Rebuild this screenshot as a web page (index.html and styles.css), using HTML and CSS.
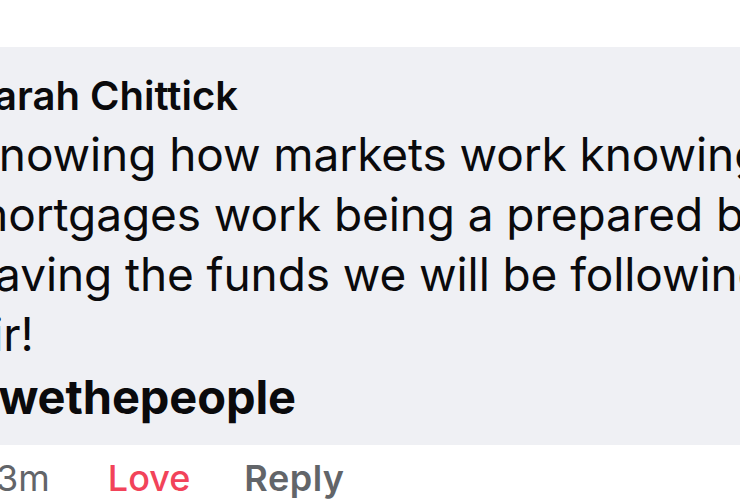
FILE: index.html
```html
<!DOCTYPE html>
<html lang="en">

<head>
    <meta charset="UTF-8">
    <meta name="viewport" content="width=device-width, initial-scale=1.0">
    <title>Comment</title>
    <link rel="stylesheet" href="styles.css">
</head>

<body>
    <div class="comment">
        <div class="bubble">
            <div class="author">Sarah Chittick</div>
            <div class="text">
                <div class="line">Knowing how markets work knowing how</div>
                <div class="line">mortgages work being a prepared buyer</div>
                <div class="line">having the funds we will be following</div>
                <div class="line">sir!</div>
                <div class="line tag">#wethepeople</div>
            </div>
        </div>
        <div class="actions">
            <span class="time">3m</span>
            <span class="love">Love</span>
            <span class="reply">Reply</span>
        </div>
    </div>
</body>

</html>
```

FILE: styles.css
```css
* {
    box-sizing: border-box;
}

body {
    margin: 0;
    padding: 0;
    background-color: #ffffff;
    color: #0a0a0c;
    font-family: Inter, "Noto Sans", sans-serif;
    overflow: hidden;
    width: 740px;
    height: 500px;
}

.comment {
    padding-top: 47px;
    margin-left: -32px;
}

.bubble {
    background-color: #eff0f4;
    padding: 24px 0 18px 0;
    width: 900px;
}

.author {
    font-size: 40px;
    font-weight: 600;
    line-height: 50px;
    white-space: nowrap;
}

.text {
    padding-top: 3px;
    font-size: 46px;
    line-height: 60px;
    white-space: nowrap;
    letter-spacing: -0.1px;
}

.tag {
    font-weight: 700;
    font-size: 47px;
    margin-top: 3px;
}

.actions {
    display: flex;
    padding-left: 28px;
    padding-top: 4px;
    font-size: 36px;
    line-height: 58px;
    color: #626569;
    white-space: nowrap;
}

.time {
    margin-right: 58px;
}

.love {
    color: #f2435a;
    font-weight: 500;
    margin-right: 54px;
}

.reply {
    font-weight: 600;
    letter-spacing: 0.5px;
}
```
